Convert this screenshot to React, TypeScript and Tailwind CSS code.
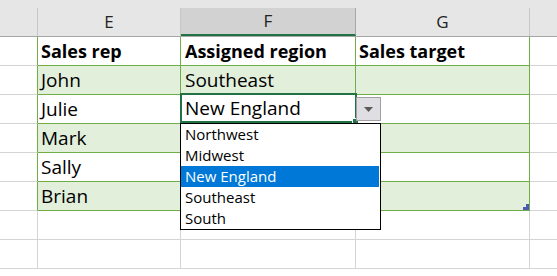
import React from "react";

const ROWS = [
  { e: "Sales rep", f: "Assigned region", g: "Sales target", head: true },
  { e: "John", f: "Southeast", g: "" },
  { e: "Julie", f: "", g: "" },
  { e: "Mark", f: "", g: "" },
  { e: "Sally", f: "", g: "" },
  { e: "Brian", f: "", g: "" },
];

const OPTIONS = ["Northwest", "Midwest", "New England", "Southeast", "South"];

const App = () => {
  return (
    <div className="relative w-[557px] h-[276px] overflow-hidden bg-white font-['Open_Sans',sans-serif] text-black">
      {/* top strip */}
      <div className="h-2 bg-[#e6e6e6]" />

      {/* column headers */}
      <div className="flex h-[29px] bg-[#e6e6e6] border-b border-[#a6a6a6] text-[17px] text-[#222]">
        <div className="w-[38px] border-r border-[#c6c6c6]" />
        <div className="w-[143px] border-r border-[#c6c6c6] flex items-center justify-center">E</div>
        <div className="w-[175px] border-r border-[#a6a6a6] bg-[#d2d2d2] border-b-2 border-b-[#217346] flex items-center justify-center">
          F
        </div>
        <div className="w-[174px] border-r border-[#c6c6c6] flex items-center justify-center">G</div>
        <div className="flex-1" />
      </div>

      {/* table rows */}
      {ROWS.map((r, i) => {
        const band = i % 2 === 1 ? "bg-[#e2efda]" : "bg-white";
        return (
          <div key={i} className={`flex h-[29px] ${r.head ? "font-bold text-[18px]" : "text-[19px]"}`}>
            <div className="w-[38px] border-r border-r-[#70ad47] border-b border-b-[#d4d4d4]" />
            <div className={`w-[143px] ${band} border-r border-b border-[#70ad47] pl-[3px] flex items-center`}>
              {r.e}
            </div>
            <div className={`w-[175px] ${band} border-r border-b border-[#70ad47] pl-[4px] flex items-center`}>
              {r.f}
            </div>
            <div className={`relative w-[174px] ${band} border-r border-b border-[#70ad47] pl-[3px] flex items-center`}>
              {r.g}
              {i === ROWS.length - 1 && (
                <svg className="absolute right-0 bottom-0" width="6" height="6" viewBox="0 0 6 6">
                  <path d="M3 0H6V6H0V3H3Z" fill="#4a5cb8" />
                </svg>
              )}
            </div>
            <div className="flex-1 border-b border-[#d4d4d4]" />
          </div>
        );
      })}

      {/* empty rows */}
      {[0, 1].map((i) => (
        <div key={i} className="flex h-[29px]">
          <div className="w-[38px] border-r border-b border-[#d4d4d4]" />
          <div className="w-[143px] border-r border-b border-[#d4d4d4]" />
          <div className="w-[175px] border-r border-b border-[#d4d4d4]" />
          <div className="w-[174px] border-r border-b border-[#d4d4d4]" />
          <div className="flex-1 border-b border-[#d4d4d4]" />
        </div>
      ))}

      {/* active cell */}
      <div className="absolute left-[180px] top-[93px] w-[177px] h-[30px] border-2 border-[#217346] pl-[3px] flex items-center text-[19px]">
        New England
        <div className="absolute right-[-3px] bottom-[-3px] w-[5px] h-[5px] bg-[#217346] outline outline-1 outline-white" />
      </div>

      {/* dropdown arrow */}
      <div className="absolute left-[356px] top-[97px] w-[25px] h-[24px] bg-[#dfdfe3] border border-[#a0a0a0] flex items-center justify-center">
        <svg width="9" height="5" viewBox="0 0 9 5">
          <path d="M0 0H9L4.5 5Z" fill="#5a5a5a" />
        </svg>
      </div>

      {/* dropdown list */}
      <div className="absolute left-[180px] top-[123px] w-[201px] bg-white border border-black text-[15px]">
        {OPTIONS.map((o) => (
          <div
            key={o}
            className={`h-[21px] pl-[4px] flex items-center mr-[1px] ${o === "New England" ? "bg-[#0078d7] text-white" : ""}`}
          >
            {o}
          </div>
        ))}
      </div>
    </div>
  );
};

export default App;
